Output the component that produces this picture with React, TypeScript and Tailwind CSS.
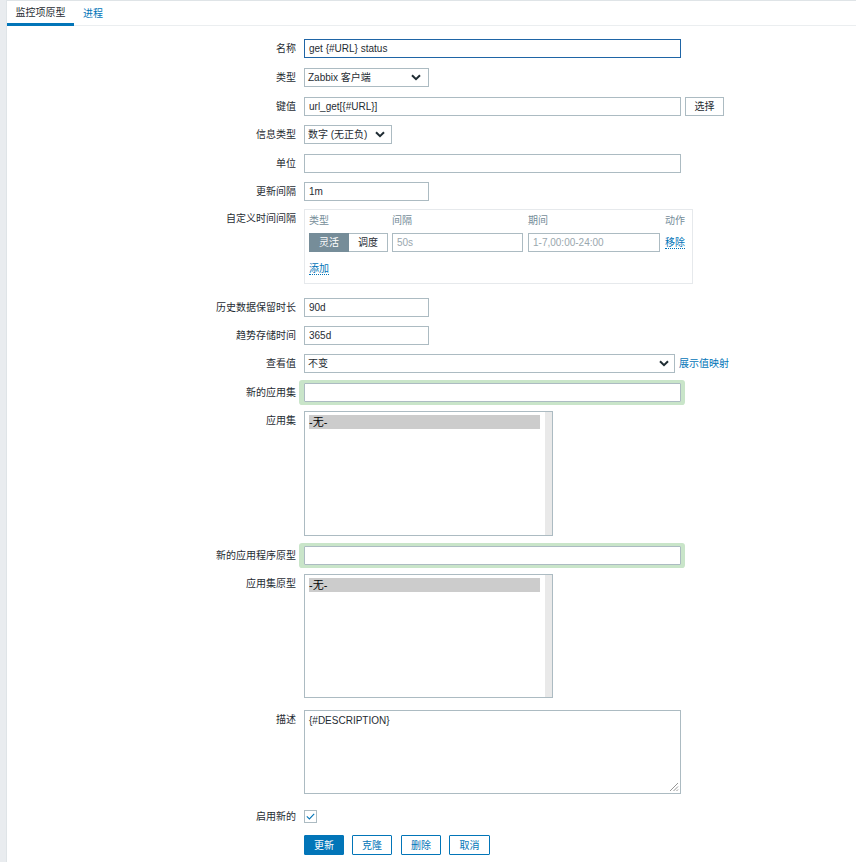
import type { ReactNode } from "react";

// ── helpers ───────────────────────────────────────────────────────────────────
function Row({
  label,
  children,
  className = "",
  center = false,
}: {
  label: string;
  children: ReactNode;
  className?: string;
  center?: boolean;
}) {
  return (
    <div className={`flex ${center ? "items-center" : ""} ${className}`}>
      <div
        className={`w-[289px] shrink-0 text-right leading-[13px] ${center ? "" : "pt-[3px]"}`}
      >
        {label}
      </div>
      <div className="ml-[8px] flex items-start">{children}</div>
    </div>
  );
}

function Chevron() {
  return (
    <svg width="10" height="7" viewBox="0 0 10 7" className="shrink-0">
      <path d="M1 1.2 L5 5.2 L9 1.2" fill="none" stroke="#1f2c33" strokeWidth="2" />
    </svg>
  );
}

function TextBox({
  value = "",
  w,
  focused = false,
  placeholder,
}: {
  value?: string;
  w: string;
  focused?: boolean;
  placeholder?: string;
}) {
  return (
    <div
      className={`h-[19px] ${w} flex items-center border bg-white px-[4px] leading-[13px] ${
        focused ? "border-[#1f65a6]" : "border-[#acbbc2]"
      }`}
    >
      {value ? value : <span className="text-[#9aa7ae]">{placeholder}</span>}
    </div>
  );
}

function Select({ value, w, pr }: { value: string; w: string; pr: string }) {
  return (
    <div
      className={`h-[19px] ${w} ${pr} flex items-center justify-between border border-[#acbbc2] bg-white pl-[3px] leading-[13px]`}
    >
      <span>{value}</span>
      <Chevron />
    </div>
  );
}

function NewBox() {
  return (
    <div className="h-[19px] w-[377px] rounded-[1px] border border-[#acbbc2] bg-white shadow-[0_0_0_3px_#c9e5c9,-2px_0_0_3px_#c9e5c9,1px_0_0_3px_#c9e5c9]" />
  );
}

function ListBox({ h }: { h: string }) {
  return (
    <div className={`${h} w-[249px] flex border border-[#acbbc2] bg-white`}>
      <div className="flex-1 pl-[4px] pr-[5px] pt-[3px]">
        <div className="h-[14px] bg-[#cccccc] leading-[14px] text-[11px] text-black">-无-</div>
      </div>
      <div className="w-[7px] bg-[#e9e9e9]" />
    </div>
  );
}

function Link({ children }: { children: ReactNode }) {
  return (
    <span className="border-b border-dotted border-[#0275b8] leading-[12px] text-[#0275b8]">
      {children}
    </span>
  );
}

// ── page ──────────────────────────────────────────────────────────────────────
export default function App() {
  return (
    <div className="flex min-h-[862px] bg-white font-['Liberation_Sans','Noto_Sans_CJK_SC',sans-serif] text-[10px] text-[#1f2c33]">
      {/* left strip */}
      <div className="w-[7px] shrink-0 border-r border-[#dfe4e7] bg-[#e9ecef]" />

      <div className="flex-1 border-t border-[#dfe4e7]">
        {/* tabs */}
        <div className="flex h-[25px] border-b border-[#ebeef0]">
          <div className="-mb-px flex h-[25px] w-[67px] items-center justify-center border-b-[3px] border-[#0275b8] pt-[1px]">
            监控项原型
          </div>
          <div className="flex h-[24px] items-center pl-[9px] pt-[1px] text-[#0275b8]">进程</div>
        </div>

        {/* form */}
        <div className="flex flex-col">
          <Row label="名称" className="mt-[13px]">
            <TextBox value="get {#URL} status" w="w-[377px]" focused />
          </Row>

          <Row label="类型" className="mt-[10px]">
            <Select value="Zabbix 客户端" w="w-[125px]" pr="pr-[7px]" />
          </Row>

          <Row label="键值" className="mt-[10px]">
            <TextBox value="url_get[{#URL}]" w="w-[377px]" />
            <div className="ml-[4px] flex h-[19px] w-[39px] items-center justify-center border border-[#acbbc2] bg-white">
              选择
            </div>
          </Row>

          <Row label="信息类型" className="mt-[9px]">
            <Select value="数字 (无正负)" w="w-[88px]" pr="pr-[6px]" />
          </Row>

          <Row label="单位" className="mt-[10px]">
            <TextBox w="w-[377px]" />
          </Row>

          <Row label="更新间隔" className="mt-[9px]">
            <TextBox value="1m" w="w-[125px]" />
          </Row>

          <Row label="自定义时间间隔" className="mt-[8px]">
            <div className="h-[75px] w-[389px] border border-[#e6e9ec] pl-[4px] pt-[4px]">
              <div className="flex leading-[13px] text-[#768d99]">
                <div className="w-[83px]">类型</div>
                <div className="w-[136px]">间隔</div>
                <div className="w-[137px]">期间</div>
                <div>动作</div>
              </div>
              <div className="mt-[6px] flex items-center">
                <div className="flex h-[19px] w-[79px]">
                  <div className="flex w-[40px] items-center justify-center border border-[#768d99] bg-[#768d99] text-white">
                    灵活
                  </div>
                  <div className="flex flex-1 items-center justify-center border border-l-0 border-[#acbbc2] bg-white">
                    调度
                  </div>
                </div>
                <div className="ml-[4px]">
                  <TextBox w="w-[131px]" placeholder="50s" />
                </div>
                <div className="ml-[5px]">
                  <TextBox w="w-[132px]" placeholder="1-7,00:00-24:00" />
                </div>
                <div className="ml-[5px]">
                  <Link>移除</Link>
                </div>
              </div>
              <div className="mt-[9px]">
                <Link>添加</Link>
              </div>
            </div>
          </Row>

          <Row label="历史数据保留时长" className="mt-[14px]">
            <TextBox value="90d" w="w-[125px]" />
          </Row>

          <Row label="趋势存储时间" className="mt-[9px]">
            <TextBox value="365d" w="w-[125px]" />
          </Row>

          <Row label="查看值" className="mt-[9px]">
            <Select value="不变" w="w-[371px]" pr="pr-[5px]" />
            <div className="ml-[4px] flex h-[19px] items-center text-[#0275b8]">展示值映射</div>
          </Row>

          <Row label="新的应用集" className="mt-[10px]">
            <NewBox />
          </Row>

          <Row label="应用集" className="mt-[9px]">
            <ListBox h="h-[125px]" />
          </Row>

          <Row label="新的应用程序原型" className="mt-[10px]">
            <NewBox />
          </Row>

          <Row label="应用集原型" className="mt-[9px]">
            <ListBox h="h-[124px]" />
          </Row>

          <Row label="描述" className="mt-[12px]">
            <div className="relative h-[84px] w-[377px] border border-[#acbbc2] bg-white px-[4px] pt-[3px] leading-[13px]">
              {"{#DESCRIPTION}"}
              <svg width="10" height="10" viewBox="0 0 10 10" className="absolute bottom-[1px] right-[1px]">
                <path d="M9 1 L1 9 M9 4.5 L4.5 9 M9 7.5 L7.5 9" stroke="#8a8a8a" strokeWidth="0.9" />
              </svg>
            </div>
          </Row>

          <Row label="启用新的" className="mt-[16px]" center>
            <div className="flex h-[13px] w-[13px] items-center justify-center border border-[#acbbc2] bg-white">
              <svg width="9" height="7" viewBox="0 0 9 7">
                <path d="M0.8 3.4 L3.4 5.9 L8.2 0.9" fill="none" stroke="#0275b8" strokeWidth="1.1" />
              </svg>
            </div>
          </Row>

          <Row label="" className="mt-[12px]">
            <div className="flex h-[20px] w-[40px] items-center justify-center rounded-[1px] border border-[#0275b8] bg-[#0275b8] text-white">
              更新
            </div>
            <div className="ml-[8px] flex h-[20px] w-[40px] items-center justify-center rounded-[1px] border border-[#0275b8] bg-white text-[#0275b8]">
              克隆
            </div>
            <div className="ml-[9px] flex h-[20px] w-[40px] items-center justify-center rounded-[1px] border border-[#0275b8] bg-white text-[#0275b8]">
              删除
            </div>
            <div className="ml-[8px] flex h-[20px] w-[41px] items-center justify-center rounded-[1px] border border-[#0275b8] bg-white text-[#0275b8]">
              取消
            </div>
          </Row>
        </div>
      </div>
    </div>
  );
}
